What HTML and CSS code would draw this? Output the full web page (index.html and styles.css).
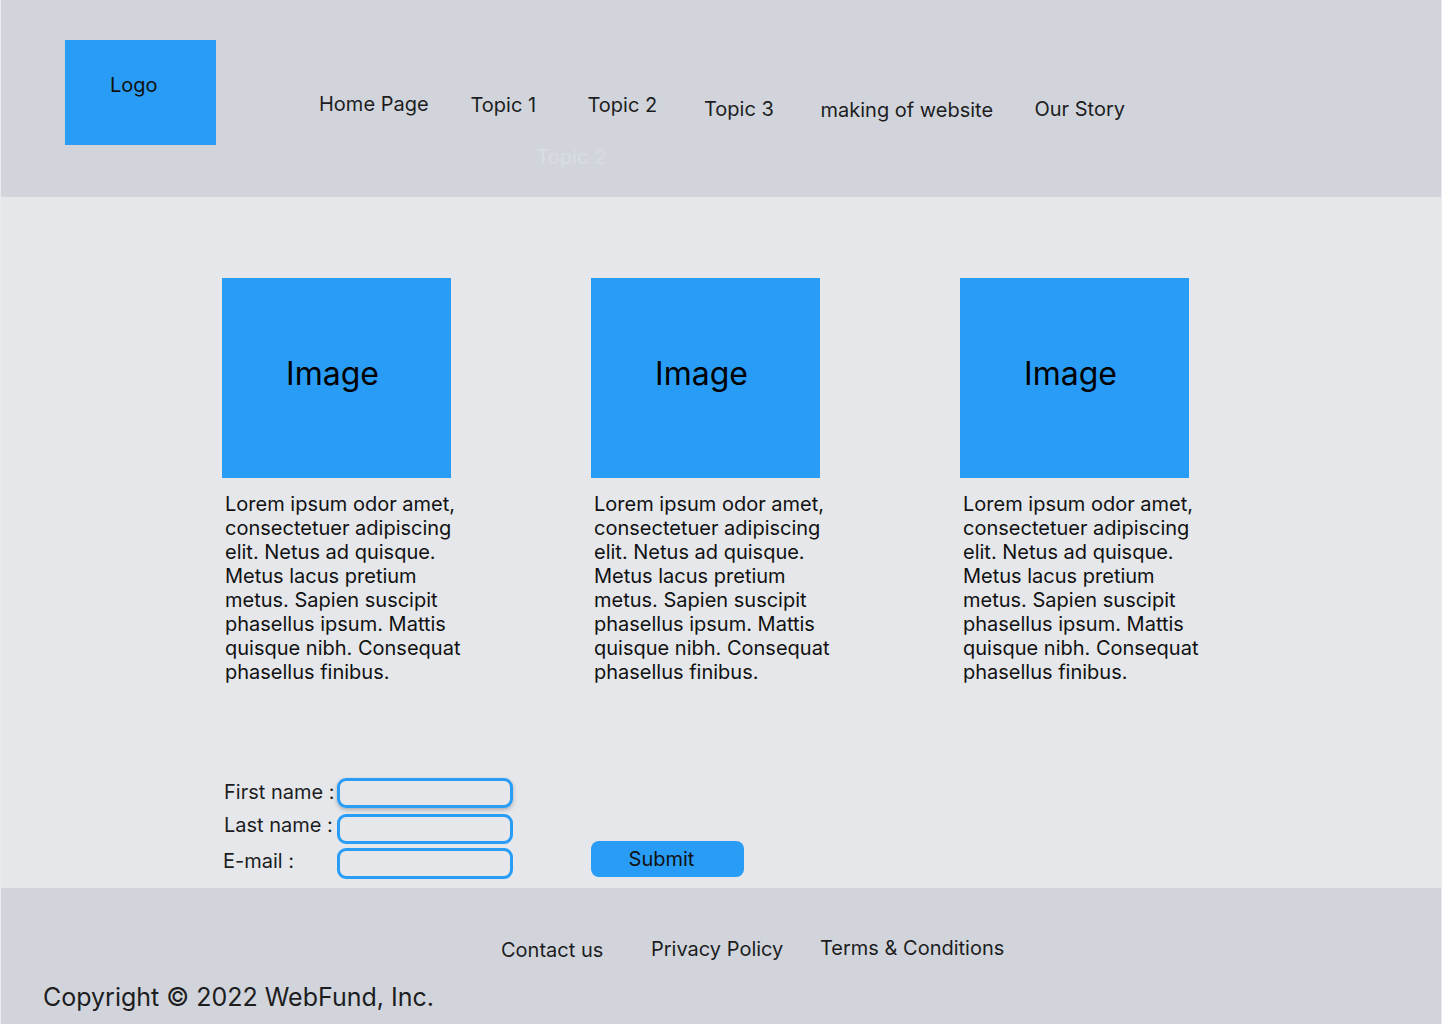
FILE: index.html
```html
<!DOCTYPE html>
<html lang="en">
<head>
<meta charset="utf-8">
<title>WebFund</title>
<link rel="stylesheet" href="styles.css">
</head>
<body>
<div class="page">
  <header class="site-header">
    <div class="logo">Logo</div>
    <nav class="main-nav">
      <ul class="nav-list">
        <li class="nav-item nav-home">Home Page</li>
        <li class="nav-item nav-t1">Topic 1</li>
        <li class="nav-item nav-t2">Topic 2<div class="dropdown">Topic 2</div></li>
        <li class="nav-item nav-t3">Topic 3</li>
        <li class="nav-item nav-making">making of website</li>
        <li class="nav-item nav-story">Our Story</li>
      </ul>
    </nav>
  </header>

  <main class="content">
    <section class="cards">
      <article class="card">
        <div class="card-image"><span>Image</span></div>
        <p class="card-text">Lorem ipsum odor amet, consectetuer adipiscing elit. Netus ad quisque. Metus lacus pretium metus. Sapien suscipit phasellus ipsum. Mattis quisque nibh. Consequat phasellus finibus.</p>
      </article>
      <article class="card">
        <div class="card-image"><span>Image</span></div>
        <p class="card-text">Lorem ipsum odor amet, consectetuer adipiscing elit. Netus ad quisque. Metus lacus pretium metus. Sapien suscipit phasellus ipsum. Mattis quisque nibh. Consequat phasellus finibus.</p>
      </article>
      <article class="card">
        <div class="card-image"><span>Image</span></div>
        <p class="card-text">Lorem ipsum odor amet, consectetuer adipiscing elit. Netus ad quisque. Metus lacus pretium metus. Sapien suscipit phasellus ipsum. Mattis quisque nibh. Consequat phasellus finibus.</p>
      </article>
    </section>

    <form class="signup">
      <div class="fields">
        <div class="field field-first">
          <label class="field-label" for="fn">First name :</label>
          <input class="field-input input-shadow" id="fn" type="text">
        </div>
        <div class="field field-last">
          <label class="field-label" for="ln">Last name :</label>
          <input class="field-input" id="ln" type="text">
        </div>
        <div class="field field-email">
          <label class="field-label" for="em">E-mail :</label>
          <input class="field-input" id="em" type="text">
        </div>
      </div>
      <button class="submit" type="button">Submit</button>
    </form>
  </main>

  <footer class="site-footer">
    <ul class="footer-links">
      <li class="footer-link link-contact">Contact us</li>
      <li class="footer-link link-privacy">Privacy Policy</li>
      <li class="footer-link link-terms">Terms &amp; Conditions</li>
    </ul>
    <p class="copyright">Copyright © 2022 WebFund, Inc.</p>
  </footer>
</div>
</body>
</html>
```

FILE: styles.css
```css
* {
  box-sizing: border-box;
}

html,
body {
  margin: 0;
  padding: 0;
}

body {
  background: #e9ebef;
  font-family: Inter, "Noto Sans", sans-serif;
  color: #1d1d1f;
}

.page {
  width: 1440px;
  margin: 0 1px;
}

/* Header */
.site-header {
  height: 197px;
  background: #d1d5db;
  display: flex;
  align-items: flex-start;
  padding: 40px 0 0 64px;
}

.logo {
  width: 151px;
  height: 105px;
  background: #299cf6;
  padding: 33px 0 0 45px;
  font-size: 20px;
  line-height: 24px;
  color: #111;
}

.main-nav {
  margin-left: 103px;
  padding-top: 52px;
}

.nav-list {
  display: grid;
  grid-template-columns: 151.5px 117px 116.5px 116.5px 214px auto;
  align-items: start;
  list-style: none;
  margin: 0;
  padding: 0;
  font-size: 20px;
  line-height: 24px;
}

.nav-item {
  position: relative;
  white-space: nowrap;
}

.nav-t1 { margin-top: 1px; }
.nav-t2 { margin-top: 1px; }
.nav-t3 { margin-top: 5px; }
.nav-making { margin-top: 6px; }
.nav-story { margin-top: 5px; }

.dropdown {
  position: absolute;
  left: -51px;
  top: 52px;
  color: #d9dce2;
  white-space: nowrap;
}

/* Main */
.content {
  height: 691px;
  background: #e5e7eb;
  padding: 81px 0 0 221px;
}

.cards {
  display: grid;
  grid-template-columns: repeat(3, 240px);
  column-gap: 129px;
}

.card-image {
  width: 229px;
  height: 200px;
  background: #299cf6;
  display: flex;
  align-items: center;
  justify-content: center;
  padding: 0 8px 9px 0;
  font-size: 32px;
  color: #000;
}

.card-text {
  margin: 14px 0 0 3px;
  width: 237px;
  font-size: 20px;
  line-height: 24px;
  color: #111;
}

/* Form */
.signup {
  display: flex;
  margin-top: 94px;
}

.fields {
  width: 369px;
  padding-left: 2px;
}

.field {
  display: flex;
  align-items: flex-start;
  height: 30px;
}

.field-last {
  margin-top: 6px;
}

.field-email {
  margin-top: 4px;
  height: 31px;
}

.field-label {
  width: 113px;
  font-size: 20px;
  line-height: 24px;
  color: #1d1d1f;
  white-space: nowrap;
}

.field-first .field-label { margin-top: 2px; }
.field-last .field-label { margin-top: -1px; }
.field-email .field-label { margin-top: 1px; margin-left: -1px; margin-right: 1px; }

.field-input {
  width: 176px;
  height: 100%;
  border: 3px solid #299cf6;
  border-radius: 9px;
  background: transparent;
  padding: 0 8px;
  font: inherit;
  outline: none;
}

.input-shadow {
  box-shadow: 0 2px 4px rgba(0, 0, 0, 0.25);
}

.submit {
  align-self: flex-end;
  margin-bottom: 2px;
  width: 153px;
  height: 36px;
  background: #299cf6;
  border: none;
  border-radius: 8px;
  padding: 0 12px 0 0;
  font-family: Inter, "Noto Sans", sans-serif;
  font-size: 20px;
  line-height: 24px;
  color: #111;
}

/* Footer */
.site-footer {
  height: 136px;
  background: #d1d5db;
  padding-top: 50px;
}

.footer-links {
  display: grid;
  grid-template-columns: 150px 169px auto;
  align-items: start;
  list-style: none;
  margin: 0 0 0 500px;
  padding: 0;
  font-size: 20px;
  line-height: 24px;
}

.footer-link {
  white-space: nowrap;
}

.link-privacy { margin-top: -1px; }
.link-terms { margin-top: -2px; }

.copyright {
  margin: 20px 0 0 42px;
  font-size: 25px;
  line-height: 30px;
  color: #1d1d1f;
}
```
